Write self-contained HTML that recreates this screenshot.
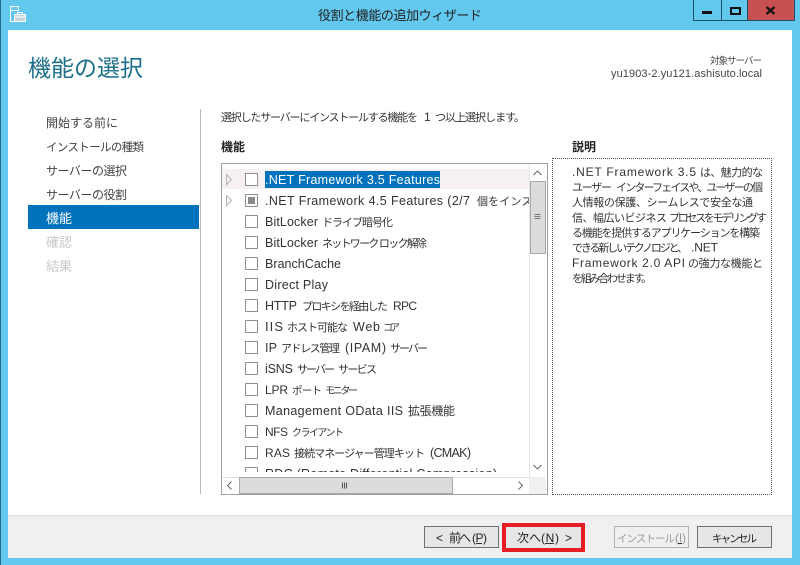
<!DOCTYPE html>
<html><head><meta charset="utf-8"><style>
html,body{margin:0;padding:0}
body{width:800px;height:565px;position:relative;overflow:hidden;background:#63c8ee;font-family:"Liberation Sans","Noto Sans CJK JP",sans-serif;font-size:12px;color:#333}
.a{position:absolute;white-space:nowrap}
.cb{position:absolute;left:245px;width:11px;height:11px;border:1px solid #8e8f8f;background:#fff}
.btn{position:absolute;top:526px;width:73px;height:20px;border:1px solid #707070;background:#e6e6e6}
svg.t{position:absolute;left:0;top:0;width:800px;height:565px;overflow:visible}
svg.t text{font-family:"Liberation Sans","Noto Sans CJK JP",sans-serif;white-space:pre}
</style></head><body>
<div class="a" style="left:0;top:0;width:1px;height:565px;background:#1f6f8f"></div>
<svg class="t" viewBox="0 0 800 565"><text x="318" y="20" font-size="13" fill="#222" textLength="164" lengthAdjust="spacing">役割と機能の追加ウィザード</text></svg>
<svg class="a" style="left:9px;top:5px" width="18" height="18" viewBox="0 0 18 18" fill="none" stroke="#fff" stroke-width="1"><path d="M1.500 1.500h8v4h-8zM1.500 5.500v11h4"/><rect x="5.500" y="9.500" width="11" height="7" fill="#c5d5dc" stroke="#fff"/><path d="M8.500 9.500v-2h5v2M5.500 12h11" stroke="#fff"/></svg>
<div class="a" style="left:693px;top:0;width:100px;height:20px;border:1px solid #1d4f66;border-top:0"></div>
<div class="a" style="left:721px;top:0;width:1px;height:20px;background:#1d4f66"></div>
<div class="a" style="left:747px;top:0;width:46px;height:20px;background:#c75050;border-left:1px solid #1d4f66"></div>
<div class="a" style="left:702px;top:11px;width:10px;height:3px;background:#111"></div>
<div class="a" style="left:730px;top:7px;width:7px;height:4px;border:2px solid #111"></div>
<svg class="a" style="left:765px;top:6px" width="11" height="9" viewBox="0 0 11 9"><path d="M1.500 1L9.500 8M9.500 1L1.500 8" stroke="#111" stroke-width="2.200" fill="none"/></svg>

<div class="a" style="left:8px;top:30px;width:784px;height:486px;background:#fff"></div>
<div class="a" style="left:8px;top:515px;width:784px;height:43px;background:#f0f0f0;border-top:1px solid #dfdfdf;box-sizing:border-box"></div>

<div class="a" style="left:28px;top:205px;width:171px;height:24px;background:#0072bc"></div>
<div class="a" style="left:200px;top:109px;width:1px;height:385px;background:#b8b8b8"></div>

<!-- list box -->
<div class="a" style="left:221px;top:163px;width:325px;height:330px;border:1px solid #a0a0a0;background:#fff"></div>
<div class="a" style="left:222px;top:169px;width:307px;height:20px;background:#f6eff3"></div>
<div class="a" style="left:265px;top:171px;width:175px;height:17px;background:#0072bc"></div>
<div class="cb" style="top:173px"></div><div class="cb" style="top:194px"></div>
<div class="a" style="left:248px;top:197px;width:7px;height:7px;background:#8a8a8a"></div>
<div class="cb" style="top:215px"></div><div class="cb" style="top:236px"></div><div class="cb" style="top:257px"></div><div class="cb" style="top:278px"></div><div class="cb" style="top:299px"></div><div class="cb" style="top:320px"></div><div class="cb" style="top:341px"></div><div class="cb" style="top:362px"></div><div class="cb" style="top:383px"></div><div class="cb" style="top:404px"></div><div class="cb" style="top:425px"></div><div class="cb" style="top:446px"></div><div class="cb" style="top:467px"></div>
<svg class="a" style="left:225px;top:174px" width="8" height="34" viewBox="0 0 8 34" fill="none" stroke="#b5b5b5"><path d="M1.500 .5L6.500 5.500L1.500 10.500zM1.500 21.500L6.500 26.500L1.500 31.500z"/></svg>

<svg class="t" viewBox="0 0 800 565" fill="#333">
<defs><clipPath id="lc"><rect x="222" y="164" width="307" height="308"/></clipPath></defs>
<g font-size="12.500" clip-path="url(#lc)">
<text x="265" y="184" fill="#fff" textLength="175">.NET Framework 3.5 Features</text>
<text x="265" y="205" textLength="205">.NET Framework 4.5 Features (2/7</text><text x="477" y="205" font-size="11" textLength="115">個をインストール済み)</text>
<text x="265" y="226" textLength="53">BitLocker</text><text x="322" y="226" font-size="11" textLength="71">ドライブ暗号化</text>
<text x="265" y="247" textLength="53">BitLocker</text><text x="322" y="247" font-size="11" textLength="105">ネットワーク ロック解除</text>
<text x="265" y="268" textLength="76">BranchCache</text>
<text x="265" y="289" textLength="63">Direct Play</text>
<text x="265" y="310" textLength="32">HTTP</text><text x="302" y="310" font-size="11" textLength="86">プロキシを経由した</text><text x="393" y="310" font-size="12" textLength="24">RPC</text>
<text x="265" y="331" font-size="13" textLength="18">IIS</text><text x="287" y="331" font-size="11" textLength="61">ホスト可能な</text><text x="353" y="331" textLength="27">Web</text><text x="383" y="331" font-size="10" textLength="17">コア</text>
<text x="265" y="352" textLength="12">IP</text><text x="281" y="352" font-size="11" textLength="59">アドレス管理</text><text x="345" y="352" textLength="41">(IPAM)</text><text x="390" y="352" font-size="11" textLength="38">サーバー</text>
<text x="265" y="373" textLength="28">iSNS</text><text x="297" y="373" font-size="11" textLength="38">サーバー</text><text x="338" y="373" font-size="11" textLength="39">サービス</text>
<text x="265" y="394" font-size="12" textLength="23">LPR</text><text x="292" y="394" font-size="10.500" textLength="30">ポート</text><text x="325" y="394" font-size="10" textLength="33">モニター</text>
<text x="265" y="415" textLength="138">Management OData IIS</text><text x="408" y="415" font-size="12" textLength="47">拡張機能</text>
<text x="265" y="436" font-size="12" textLength="23">NFS</text><text x="292" y="436" font-size="10" textLength="52">クライアント</text>
<text x="265" y="457" font-size="12" textLength="25">RAS</text><text x="294" y="457" font-size="11" textLength="131">接続マネージャー管理キット</text><text x="430" y="457" textLength="41">(CMAK)</text>
<text x="265" y="478" textLength="232">RDC (Remote Differential Compression)</text>
</g>
</svg>

<!-- v scrollbar -->
<div class="a" style="left:222px;top:472px;width:308px;height:6px;background:#fff"></div>
<div class="a" style="left:529px;top:164px;width:17px;height:313px;background:#fff;border-left:1px solid #e6e6e6;box-sizing:border-box"></div>
<div class="a" style="left:530px;top:181px;width:16px;height:73px;background:#dcdcdc;border:1px solid #a9a9a9;box-sizing:border-box"></div>
<svg class="a" style="left:529px;top:164px" width="17" height="313" viewBox="0 0 17 313" fill="none" stroke="#666"><path d="M4.500 11L8.500 7L12.500 11"/><path d="M4.500 301L8.500 305L12.500 301"/><path d="M5.500 50.500h6M5.500 52.500h6M5.500 54.500h6" stroke="#777"/></svg>
<!-- h scrollbar -->
<div class="a" style="left:222px;top:477px;width:324px;height:17px;background:#fff;border-top:1px solid #e0e0e0;box-sizing:border-box"></div>
<div class="a" style="left:529px;top:477px;width:17px;height:17px;background:#f0f0f0"></div>
<div class="a" style="left:239px;top:477px;width:214px;height:17px;background:#dcdcdc;border:1px solid #a9a9a9;box-sizing:border-box"></div>
<svg class="a" style="left:222px;top:477px" width="307" height="17" viewBox="0 0 307 17" fill="none" stroke="#666"><path d="M9.500 4.500L5.500 8.500L9.500 12.500"/><path d="M296.500 4.500L300.500 8.500L296.500 12.500"/><path d="M120.500 5.500v6M122.500 5.500v6M124.500 5.500v6" stroke="#555"/></svg>

<!-- description -->
<div class="a" style="left:552px;top:158px;width:220px;height:337px;border:1px dotted #555;box-sizing:border-box"></div>

<!-- buttons -->
<div class="btn" style="left:424px"></div>
<div class="a" style="left:502px;top:523px;width:83px;height:29px;background:#e6e6e6;border:4px solid #e81c24;box-sizing:border-box"></div>
<div class="btn" style="left:614px;background:#f0f0f0;border-color:#adb2b5"></div>
<div class="btn" style="left:697px"></div>

<svg class="t" viewBox="0 0 800 565" fill="#333">
<text x="28" y="76" font-size="23" fill="#1c6f8c" textLength="115">機能の選択</text>
<text x="710" y="64" font-size="9.500" fill="#444" textLength="52">対象サーバー</text>
<text x="611" y="77" font-size="11" fill="#444" textLength="151">yu1903-2.yu121.ashisuto.local</text>

<g font-size="12" fill="#444">
<text x="46" y="127" textLength="72">開始する前に</text>
<text x="46" y="151" font-size="11.500" textLength="98">インストールの種類</text>
<text x="46" y="175" textLength="81">サーバーの選択</text>
<text x="46" y="199" textLength="81">サーバーの役割</text>
<text x="46" y="223" fill="#fff" font-size="13" textLength="26">機能</text>
<text x="46" y="247" fill="#c8c8c8" font-size="13" textLength="26">確認</text>
<text x="46" y="271" fill="#c8c8c8" font-size="13" textLength="26">結果</text>
</g>

<g font-size="11">
<text x="221" y="121" textLength="197">選択したサーバーにインストールする機能を</text>
<text x="424" y="121" font-size="12">1</text>
<text x="435" y="121" textLength="90">つ以上選択します。</text>
</g>
<text x="221" y="151" font-size="12" font-weight="bold" fill="#222" textLength="24">機能</text>
<text x="572" y="151" font-size="12" font-weight="bold" fill="#222" textLength="24">説明</text>

<g font-size="11">
<text x="572" y="176" font-size="12" textLength="124">.NET Framework 3.5</text><text x="700" y="176" textLength="63">は、魅力的な</text>
<text x="572" y="191" textLength="40">ユーザー</text><text x="616" y="191" textLength="147">インターフェイスや、ユーザーの個</text>
<text x="572" y="206" textLength="181">人情報の保護、シームレスで安全な通</text>
<text x="572" y="221.500" textLength="95">信、幅広いビジネス</text><text x="669" y="221.500" textLength="98">プロセスをモデリングす</text>
<text x="572" y="236.500" textLength="188">る機能を提供するアプリケーションを構築</text>
<text x="572" y="251.500" textLength="116">できる新しいテクノロジと、</text><text x="691" y="251.500" font-size="12" textLength="27">.NET</text>
<text x="572" y="267" font-size="12" textLength="113">Framework 2.0 API</text><text x="688" y="267" textLength="75">の強力な機能と</text>
<text x="572" y="282" textLength="80">を組み合わせます。</text>
</g>

<g font-size="12" fill="#222">
<text x="436" y="542" textLength="7">&lt;</text><text x="449" y="542" textLength="22">前へ</text><text x="472" y="542" textLength="15">(P)</text>
<text x="517" y="542" textLength="24">次へ</text><text x="541" y="542" textLength="18">(N)</text><text x="565" y="542">&gt;</text>
<text x="617" y="542" font-size="10.500" fill="#9a9a9a" textLength="58">インストール</text><text x="675" y="542" fill="#9a9a9a" textLength="11">(I)</text>
<text x="712" y="542" font-size="10.500" textLength="45">キャンセル</text>
</g>
<path d="M476 543.500h6M545 543.500h9M678 543.500h4" stroke="#333" fill="none"/>
</svg>
</body></html>
